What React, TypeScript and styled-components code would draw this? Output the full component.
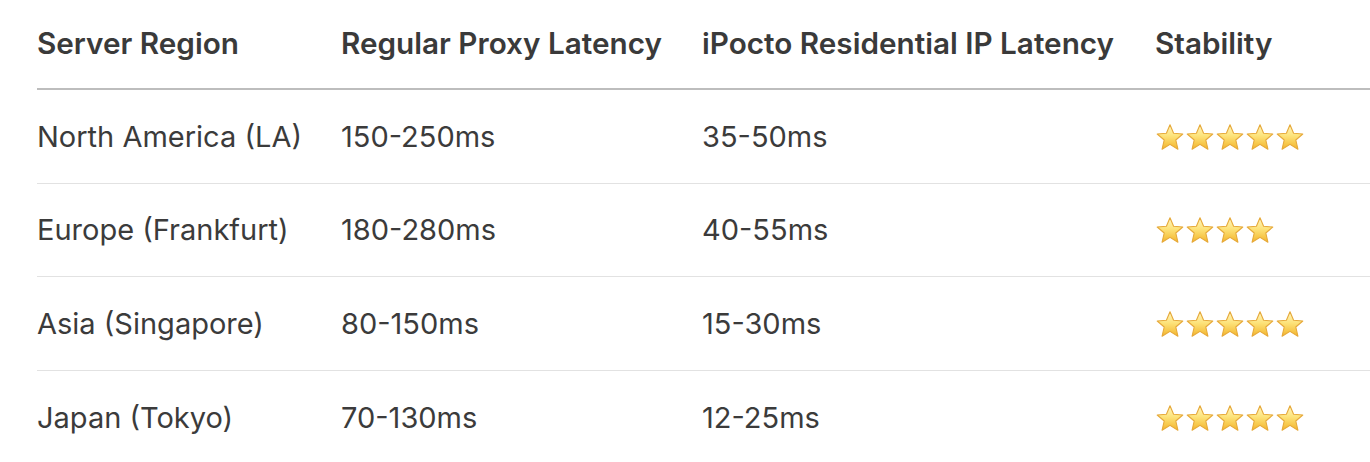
import React from 'react'
import styled, { createGlobalStyle } from 'styled-components'

interface Row {
  region: string
  regular: string
  ipocto: string
  stars: number
}

const rows: Row[] = [
  { region: 'North America (LA)', regular: '150-250ms', ipocto: '35-50ms', stars: 5 },
  { region: 'Europe (Frankfurt)', regular: '180-280ms', ipocto: '40-55ms', stars: 4 },
  { region: 'Asia (Singapore)', regular: '80-150ms', ipocto: '15-30ms', stars: 5 },
  { region: 'Japan (Tokyo)', regular: '70-130ms', ipocto: '12-25ms', stars: 5 },
]

const Star: React.FC<{ id: string }> = ({ id }) => (
  <svg width="30" height="29" viewBox="0 0 30 29">
    <defs>
      <linearGradient id={id} x1="0" y1="0" x2="0" y2="1">
        <stop offset="0" stopColor="#fff6c4" />
        <stop offset="0.45" stopColor="#fde37a" />
        <stop offset="1" stopColor="#f3b52c" />
      </linearGradient>
    </defs>
    <path
      d="M15 1.8 L18.6 10.2 L27.8 11 L20.8 17 L22.9 26.2 L15 21.4 L7.1 26.2 L9.2 17 L2.2 11 L11.4 10.2 Z"
      fill={`url(#${id})`}
      stroke="#e6a93a"
      strokeWidth="1.1"
      strokeLinejoin="round"
    />
  </svg>
)

const App: React.FC = () => {
  return (
    <>
      <GlobalStyle />
      <StyledWrap>
        <StyledTable>
          <colgroup>
            <col style={{ width: 304 }} />
            <col style={{ width: 361 }} />
            <col style={{ width: 453 }} />
            <col />
          </colgroup>
          <thead>
            <tr>
              <StyledHead>Server Region</StyledHead>
              <StyledHead>Regular Proxy Latency</StyledHead>
              <StyledHead>iPocto Residential IP Latency</StyledHead>
              <StyledHead>Stability</StyledHead>
            </tr>
          </thead>
          <tbody>
            {rows.map((row, i) => (
              <StyledRow key={row.region}>
                <StyledCell>{row.region}</StyledCell>
                <StyledCell>{row.regular}</StyledCell>
                <StyledCell>{row.ipocto}</StyledCell>
                <StyledCell>
                  <StyledStars>
                    {Array.from({ length: row.stars }).map((_, s) => (
                      <Star key={s} id={`star-${i}-${s}`} />
                    ))}
                  </StyledStars>
                </StyledCell>
              </StyledRow>
            ))}
          </tbody>
        </StyledTable>
      </StyledWrap>
    </>
  )
}

const GlobalStyle = createGlobalStyle`
  body {
    margin: 0;
    background: #ffffff;
    font-family: Inter, "Noto Sans", "Liberation Sans", sans-serif;
    color: #3b3b3b;
    overflow: hidden;
  }
`

const StyledWrap = styled.div`
  padding-left: 37px;
  width: 1400px;
`

const StyledTable = styled.table`
  border-collapse: collapse;
  width: 1363px;
  table-layout: fixed;
  font-size: 29px;
`

const StyledHead = styled.th`
  text-align: left;
  font-weight: 600;
  font-size: 29.7px;
  height: 85px;
  padding: 0 0 3px;
  vertical-align: middle;
  border-bottom: 2px solid #bdbdbd;
  color: #3a3a3a;
  white-space: nowrap;
`

const StyledRow = styled.tr`
  border-bottom: 1px solid #e2e2e2;
`

const StyledCell = styled.td`
  height: 92.6px;
  padding: 0;
  vertical-align: middle;
  white-space: nowrap;
`

const StyledStars = styled.div`
  display: flex;
  align-items: center;
  margin-top: 2px;
`

export default App
